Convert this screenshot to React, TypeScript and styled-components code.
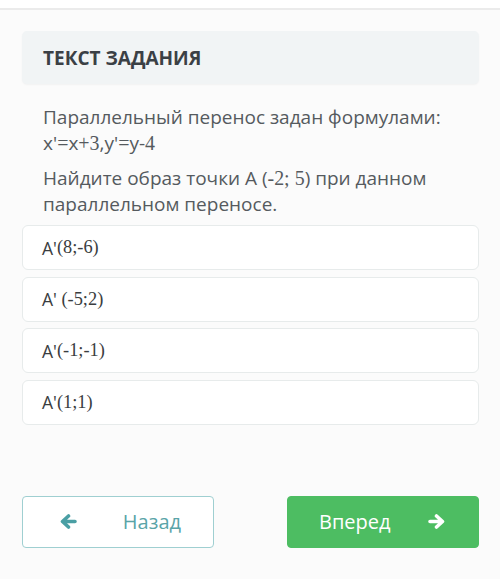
import React from "react";
import styled, { createGlobalStyle } from "styled-components";

const GlobalStyle = createGlobalStyle`
  body {
    margin: 0;
    background: #fbfbfb;
    font-family: "Open Sans", "Noto Sans", sans-serif;
  }
`;

const options = [
  { label: "A'", value: "(8;-6)" },
  { label: "A' ", value: "(-5;2)" },
  { label: "A'", value: "(-1;-1)" },
  { label: "A'", value: "(1;1)" },
];

// bold arrow like the old font-awesome one
const Arrow = ({ dir }: { dir: "left" | "right" }) => (
  <svg
    width="18"
    height="15"
    viewBox="0 0 18 15"
    style={{ transform: dir === "right" ? "scaleX(-1)" : undefined }}
  >
    <path
      d="M16 7.5H4 M9.5 2L3.5 7.5L9.5 13"
      fill="none"
      stroke="currentColor"
      strokeWidth="3.6"
      strokeLinecap="round"
      strokeLinejoin="round"
    />
  </svg>
);

const App = () => {
  return (
    <>
      <GlobalStyle />
      <TopBar />
      <Page>
        <TaskHeader>ТЕКСТ ЗАДАНИЯ</TaskHeader>

        <Question>
          <Paragraph>
            Параллельный перенос задан формулами:
            <br />
            x'<Math>=</Math>x<Math>+3</Math>,y'<Math>=</Math>y-<Math>4</Math>
          </Paragraph>
          <Paragraph>
            Найдите образ точки А (<Math>-2; 5</Math>) при данном
            параллельном переносе.
          </Paragraph>
        </Question>

        <OptionList>
          {options.map((o, i) => (
            <Option key={i}>
              {o.label}
              <Math>{o.value}</Math>
            </Option>
          ))}
        </OptionList>

        <Footer>
          <NavButton>
            <Arrow dir="left" />
            <span>Назад</span>
          </NavButton>
          <NavButton $primary>
            <span>Вперед</span>
            <Arrow dir="right" />
          </NavButton>
        </Footer>
      </Page>
    </>
  );
};

export default App;

const TopBar = styled.div`
  height: 8px;
  background: #ffffff;
  border-bottom: 2px solid #ebebeb;
`;

const Page = styled.div`
  padding: 21px 21px 30px 22px;
`;

const TaskHeader = styled.div`
  height: 53px;
  display: flex;
  align-items: center;
  padding-left: 21px;
  background: #f1f4f5;
  border-radius: 5px;
  box-shadow: 0 1px 2px rgba(0, 0, 0, 0.04);
  font-size: 19px;
  font-weight: 700;
  color: #3b4045;
`;

const Question = styled.div`
  margin-top: 20px;
  padding-left: 21px;
  color: #555a5e;
  font-size: 19px;
  line-height: 26px;
`;

const Paragraph = styled.p`
  margin: 0 0 9px;

  &:last-child {
    margin-bottom: 0;
  }
`;

const Math = styled.span`
  font-family: "Liberation Serif", "DejaVu Serif", serif;
  font-size: 1.05em;
`;

const OptionList = styled.div`
  margin-top: 8px;
  display: flex;
  flex-direction: column;
  gap: 6.5px;
`;

const Option = styled.div`
  height: 45px;
  box-sizing: border-box;
  display: flex;
  align-items: center;
  padding-left: 19px;
  background: #ffffff;
  border: 1px solid #e7ebeb;
  border-radius: 6px;
  font-size: 17.5px;
  color: #3a3d40;
  white-space: pre;
`;

const Footer = styled.div`
  margin-top: 71px;
  display: flex;
  justify-content: space-between;
`;

const NavButton = styled.button<{ $primary?: boolean }>`
  width: 192px;
  height: 52px;
  display: flex;
  align-items: center;
  justify-content: space-between;
  padding: 0 32px 0 ${(p) => (p.$primary ? 31 : 36)}px;
  box-sizing: border-box;
  border-radius: 4px;
  border: 1px solid ${(p) => (p.$primary ? "#4dbd62" : "#9fcfd1")};
  background: ${(p) => (p.$primary ? "#4dbd62" : "#ffffff")};
  color: ${(p) => (p.$primary ? "#ffffff" : "#5aa4a8")};
  font-family: "Open Sans", sans-serif;
  font-size: 20px;
  cursor: pointer;

  svg {
    color: ${(p) => (p.$primary ? "#ffffff" : "#4a9fa4")};
  }
`;
